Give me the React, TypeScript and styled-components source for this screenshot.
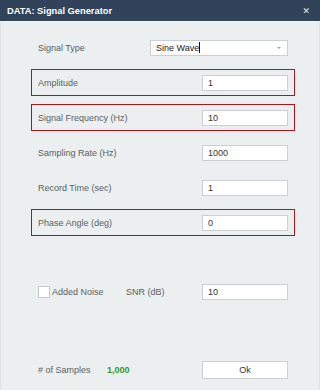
import styled, { createGlobalStyle } from 'styled-components';

type FieldRow = { label: string; value: string; marked?: boolean };

const fields: FieldRow[] = [
  { label: 'Amplitude', value: '1', marked: true },
  { label: 'Signal Frequency (Hz)', value: '10', marked: true },
  { label: 'Sampling Rate (Hz)', value: '1000' },
  { label: 'Record Time (sec)', value: '1' },
  { label: 'Phase Angle (deg)', value: '0', marked: true },
];

export default function App() {
  return (
    <>
      <GlobalStyle />
      <Window>
        <TitleBar>
          <Title>DATA: Signal Generator</Title>
          <Close>✕</Close>
        </TitleBar>
        <Body>
          <Form>
            <Row>
              <Label>Signal Type</Label>
              <Select>
                <span>Sine Wave</span>
                <Caret />
                <Arrow />
              </Select>
            </Row>
            {fields.map((f, i) => (
              <Row key={i} $marked={f.marked}>
                <Label>{f.label}</Label>
                <Input>{f.value}</Input>
              </Row>
            ))}
          </Form>
          <NoiseRow>
            <Check />
            <CheckLabel>Added Noise</CheckLabel>
            <SnrLabel>SNR (dB)</SnrLabel>
            <Input>10</Input>
          </NoiseRow>
          <FooterRow>
            <Label $width={69}># of Samples</Label>
            <Count>1,000</Count>
            <OkButton>Ok</OkButton>
          </FooterRow>
        </Body>
      </Window>
    </>
  );
}

const GlobalStyle = createGlobalStyle`
  html, body {
    margin: 0;
    padding: 0;
    background: #ebeff0;
  }
  body {
    font-family: "Liberation Sans", Arial, sans-serif;
    font-size: 9px;
  }
`;

const Window = styled.div`
  width: 320px;
  height: 390px;
  box-sizing: border-box;
  display: flex;
  flex-direction: column;
  background: #ebeff0;
  border-left: 1px solid #dde2e4;
  border-right: 1px solid #dde2e4;
`;

const TitleBar = styled.div`
  height: 21px;
  display: flex;
  align-items: center;
  justify-content: space-between;
  padding: 0 10px 0 7px;
  margin: 0 -1px;
  background: #30435a;
  border-bottom: 1px solid #f6f8f8;
`;

const Title = styled.div`
  color: #ffffff;
  font-weight: bold;
  font-size: 9.3px;
`;

const Close = styled.div`
  color: #e3e7ec;
  font-size: 9px;
  font-weight: bold;
  font-family: "DejaVu Sans", sans-serif;
`;

const Body = styled.div`
  flex: 1;
  padding: 12px 0 0 30px;
  display: flex;
  flex-direction: column;
`;

const Form = styled.div`
  display: flex;
  flex-direction: column;
  gap: 8px;
`;

const Row = styled.div<{ $marked?: boolean }>`
  width: 264px;
  height: 27px;
  box-sizing: border-box;
  display: flex;
  align-items: center;
  padding: 0 6px;
  border: 1px solid ${(p) => (p.$marked ? '#b0141c' : 'transparent')};
`;

const Label = styled.div<{ $width?: number }>`
  width: ${(p) => p.$width ?? 112}px;
  color: #5a5f63;
`;

const fieldBox = `
  height: 16px;
  box-sizing: border-box;
  background: #ffffff;
  border: 1px solid #c9cfd2;
  display: flex;
  align-items: center;
  color: #333;
`;

const Select = styled.div`
  ${fieldBox}
  width: 138px;
  padding: 0 6px 0 5px;
  position: relative;
  color: #222;
`;

const Caret = styled.span`
  width: 1px;
  height: 11px;
  background: #111;
`;

const Arrow = styled.span`
  position: absolute;
  right: 6px;
  top: 6px;
  border-left: 2px solid transparent;
  border-right: 2px solid transparent;
  border-top: 2px solid #9a9fa3;
`;

const Input = styled.div`
  ${fieldBox}
  width: 86px;
  margin-left: auto;
  padding-left: 5px;
`;

const NoiseRow = styled.div`
  width: 264px;
  height: 27px;
  margin-top: 42px;
  box-sizing: border-box;
  display: flex;
  align-items: center;
  padding: 0 7px;
`;

const Check = styled.div`
  width: 12px;
  height: 12px;
  box-sizing: border-box;
  background: #ffffff;
  border: 1px solid #c3c9cc;
`;

const CheckLabel = styled.div`
  margin-left: 2px;
  width: 74px;
  color: #5a5f63;
`;

const SnrLabel = styled.div`
  color: #5a5f63;
`;

const FooterRow = styled(NoiseRow)`
  margin-top: 51px;
`;

const Count = styled.div`
  color: #2e9b2e;
  font-weight: bold;
`;

const OkButton = styled.div`
  ${fieldBox}
  width: 86px;
  height: 18px;
  margin-left: auto;
  justify-content: center;
  color: #333;
`;
